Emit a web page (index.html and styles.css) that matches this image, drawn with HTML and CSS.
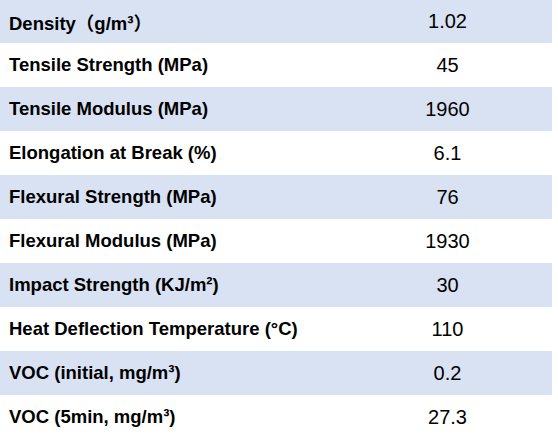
FILE: index.html
```html
<!DOCTYPE HTML>
<html>
    <head>
        <meta charset="UTF-8">
        <title>Properties</title>
        <link rel="stylesheet" href="styles.css">
    </head>
    <body>
        <table class="props">
            <tr class="odd"><td class="name">Density（g/m³）</td><td class="val">1.02</td></tr>
            <tr><td class="name">Tensile Strength (MPa)</td><td class="val">45</td></tr>
            <tr class="odd"><td class="name">Tensile Modulus (MPa)</td><td class="val">1960</td></tr>
            <tr><td class="name">Elongation at Break (%)</td><td class="val">6.1</td></tr>
            <tr class="odd"><td class="name">Flexural Strength (MPa)</td><td class="val">76</td></tr>
            <tr><td class="name">Flexural Modulus (MPa)</td><td class="val">1930</td></tr>
            <tr class="odd"><td class="name">Impact Strength (KJ/m²)</td><td class="val">30</td></tr>
            <tr><td class="name">Heat Deflection Temperature (°C)</td><td class="val">110</td></tr>
            <tr class="odd"><td class="name">VOC (initial, mg/m³)</td><td class="val">0.2</td></tr>
            <tr><td class="name">VOC (5min, mg/m³)</td><td class="val">27.3</td></tr>
        </table>
    </body>
</html>
```

FILE: styles.css
```css
body{
    margin: 0;
    background: #fff;
    font-family: "Liberation Sans", Arial, "Noto Sans CJK SC", sans-serif;
    color: #000;
}

.props{
    width: 552px;
    border-collapse: collapse;
}
.props tr{
    height: 44px;
}
.props tr:first-child{
    height: 43px;
}
.props tr.odd{
    background-color: #d9e2f3;
}
.props td{
    padding: 0;
    vertical-align: middle;
}
.props td.name{
    width: 334px;
    padding-left: 9px;
    font-size: 18.5px;
    font-weight: bold;
}
.props td.val{
    text-align: center;
    font-size: 20px;
}
```
